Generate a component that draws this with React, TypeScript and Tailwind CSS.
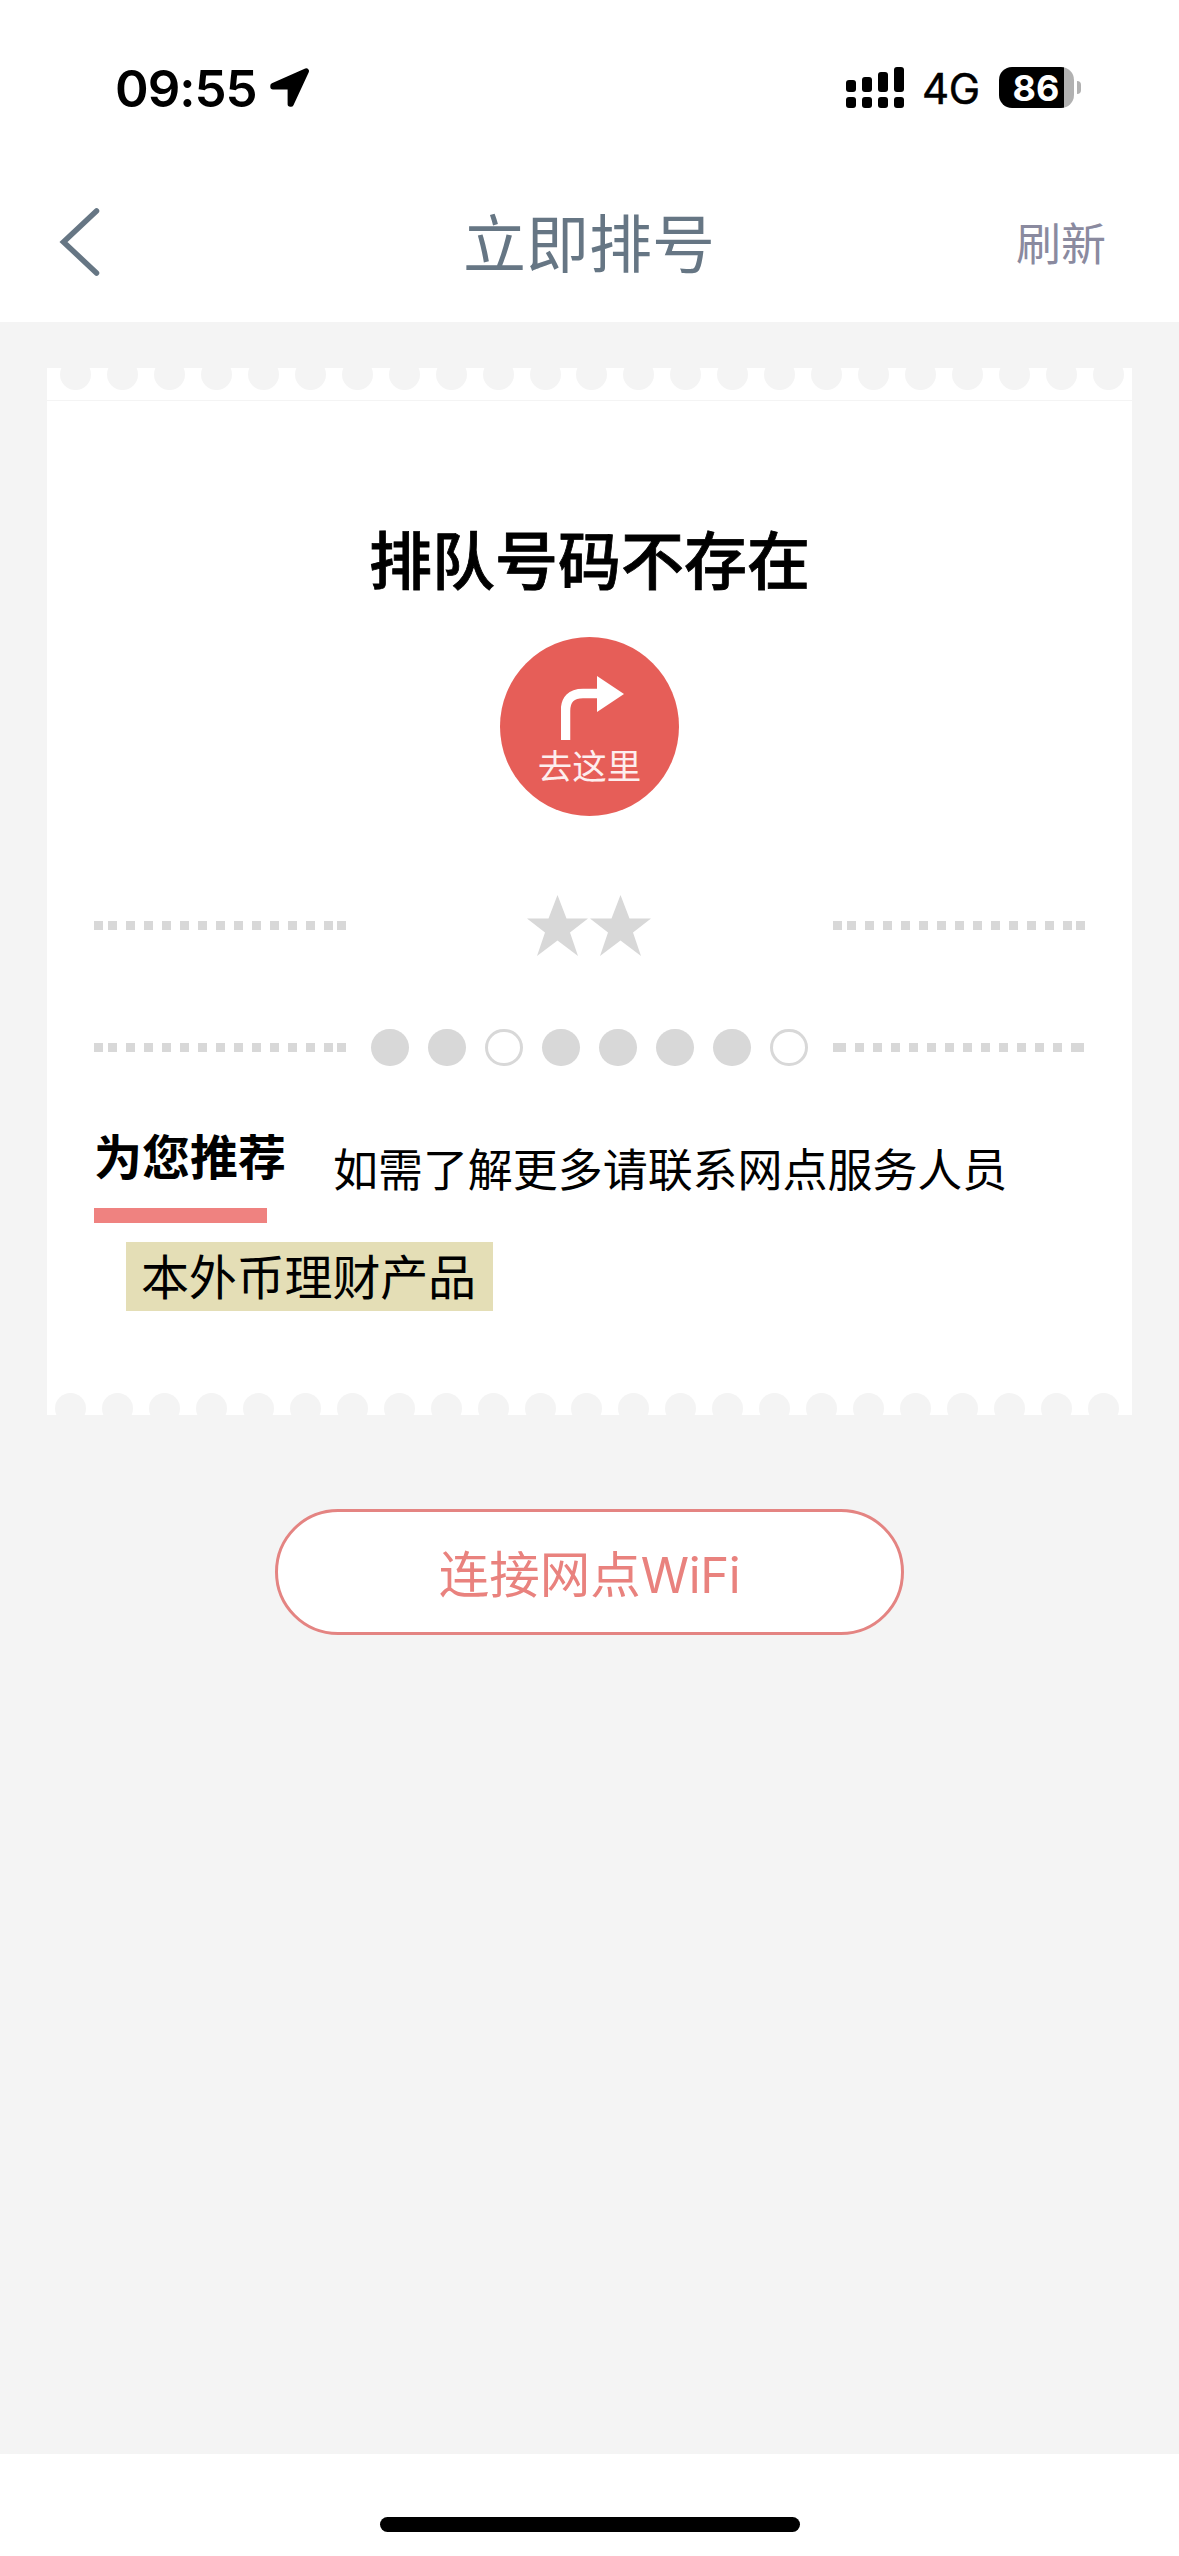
interface NotchRowProps {
  edge: "top" | "bottom";
}

interface DashLineProps {
  joined?: boolean;
}

const NOTCH_COUNT = 23;
const DOTS = [true, true, false, true, true, true, true, false];
const SIGNAL_BARS = ["h-3", "h-[15px]", "h-5", "h-[25px]"];

function StatusBar() {
  return (
    <div className="flex h-[175px] items-start justify-between pl-[115px] pr-[98px] pt-[67px] font-[Inter,sans-serif] text-black">
      <div className="flex h-[42px] items-center">
        <span className="w-[155px] text-[51px] font-semibold leading-none tracking-[-1px]">09:55</span>
        <svg width="40" height="40" viewBox="0 0 40 40">
          <path
            d="M3 17.8 L36.3 3 L21 36 L20.3 36 L20.3 18.8 L3 18.8Z"
            fill="#000"
            stroke="#000"
            strokeWidth="5.4"
            strokeLinejoin="round"
          />
        </svg>
      </div>
      <div className="flex h-[41px] items-center">
        <div className="flex h-[41px] w-[58px] items-end gap-1.5">
          {SIGNAL_BARS.map((height) => (
            <div key={height} className="flex flex-col gap-[5px]">
              <div className={`w-2.5 rounded-[3px] bg-black ${height}`} />
              <div className="h-[11px] w-2.5 rounded-[3px] bg-black" />
            </div>
          ))}
        </div>
        <span className="ml-[18px] w-[60px] pt-[3px] text-[42px] leading-none tracking-[-0.5px] [-webkit-text-stroke:0.5px_black]">
          4G
        </span>
        <div className="ml-[17px] flex h-[41px] w-[75px] items-center justify-center rounded-[13px] bg-[linear-gradient(90deg,#000_65px,#b1b1b1_65px)] text-[36px] font-bold leading-none text-white">
          <span className="-ml-px">86</span>
        </div>
        <div className="ml-[3px] h-[13px] w-[4px] rounded-r-full bg-[#b1b1b1]" />
      </div>
    </div>
  );
}

function NavBar() {
  return (
    <div className="grid h-[147px] grid-cols-3 px-[59px]">
      <div className="pt-[30px]">
        <svg width="46" height="74" viewBox="0 0 46 74" fill="none">
          <path d="M37.5 6 L4.5 37 L37.5 68" stroke="#667684" strokeWidth="5.5" strokeLinecap="round" />
        </svg>
      </div>
      <h1 className="pr-px pt-[32px] text-center text-[63px] leading-[66px] text-[#667684]">立即排号</h1>
      <span className="pr-[14px] pt-[37px] text-right text-[45px] leading-[60px] text-[#8a8a9f]">刷新</span>
    </div>
  );
}

function NotchRow({ edge }: NotchRowProps) {
  return (
    <div
      className={`flex h-[22px] w-[1064px] justify-between overflow-hidden ${
        edge === "top" ? "ml-[13px] items-end" : "ml-2 items-start"
      }`}
    >
      {Array.from({ length: NOTCH_COUNT }, (_, i) => (
        <div key={i} className="size-[31px] shrink-0 rounded-full bg-[#f4f4f4]" />
      ))}
    </div>
  );
}

function DashLine({ joined = false }: DashLineProps) {
  // the dashes sit tighter at both ends
  const cap = joined ? "w-[13px]" : "w-[9px]";
  const count = joined ? 12 : 13;

  return (
    <div className={`flex h-[9px] justify-between ${joined ? "mr-px w-[251px]" : "w-[252px]"}`}>
      <div className={`bg-[#d8d8d8] ${cap}`} />
      <div className="flex gap-[9px]">
        {Array.from({ length: count }, (_, i) => (
          <div key={i} className="w-[9px] bg-[#d8d8d8]" />
        ))}
      </div>
      <div className={`bg-[#d8d8d8] ${cap}`} />
    </div>
  );
}

function Star() {
  return (
    <svg width="63" height="62" viewBox="0 0 63 62">
      <path
        d="M31.5 0 L40.5 23.5 H62 L44 37.5 L52 61 L31.5 45.5 L11 61 L19 37.5 L1 23.5 H22.5Z"
        fill="#d8d8d8"
      />
    </svg>
  );
}

function GoHereButton() {
  return (
    <button className="mt-[44px] flex size-[179px] flex-col items-center rounded-full bg-[#e65e58] pt-[39px] text-white">
      <svg width="64" height="64" viewBox="0 0 64 64" className="ml-[7px]">
        <path d="M4.5 64 V35 Q4.5 17.5 22 17.5 H38" fill="none" stroke="#fff" strokeWidth="9.5" />
        <path d="M36 0 L63 18 L36 36Z" fill="#fff" />
      </svg>
      <span className="mt-[4px] text-[34.5px] leading-[40px] text-[#fdeeee]">去这里</span>
    </button>
  );
}

function TicketCard() {
  return (
    <section className="mx-[47px] mt-[46px] flex h-[1047px] flex-col bg-white">
      <NotchRow edge="top" />
      <div className="mt-[10px] h-px bg-[#f4f4f4]" />

      <div className="mt-[120px] flex flex-col items-center">
        <h2 className="text-[63px] font-medium leading-[72px] text-black [-webkit-text-stroke:0.8px_black]">
          排队号码不存在
        </h2>
        <GoHereButton />
      </div>

      <div className="mt-[78px] flex h-[63px] items-center justify-between px-[47px]">
        <DashLine />
        <div className="mr-[2px] flex">
          <Star />
          <Star />
        </div>
        <DashLine />
      </div>

      <div className="mt-[72px] flex h-[37px] items-center justify-between px-[47px]">
        <DashLine />
        <div className="mr-px flex gap-[19px]">
          {DOTS.map((filled, i) => (
            <div
              key={i}
              className={`h-[37px] w-[38px] rounded-full ${
                filled ? "bg-[#d8d8d8]" : "border-[3px] border-[#d8d8d8]"
              }`}
            />
          ))}
        </div>
        <DashLine joined />
      </div>

      <div className="mt-[57px] flex pl-[47px] text-black">
        <div className="w-[239px]">
          <h3 className="h-[85px] pt-[3px] text-[48px] font-bold leading-[56px]">为您推荐</h3>
          <div className="h-[15px] w-[173px] bg-[#ef8280]" />
        </div>
        <p className="pt-[17px] text-[45px] leading-[56px] tracking-[-0.05px]">如需了解更多请联系网点服务人员</p>
      </div>
      <div className="ml-[79px] mt-[19px] h-[69px] w-[367px] bg-[#e4deb6] pl-[15px] text-[48px] leading-[64px] tracking-[-0.15px] text-black">
        本外币理财产品
      </div>

      <div className="mt-auto">
        <NotchRow edge="bottom" />
      </div>
    </section>
  );
}

export default function App() {
  return (
    <div className="flex h-[2556px] w-[1179px] flex-col bg-[#f4f4f4] font-['Noto_Sans_CJK_SC',sans-serif]">
      <header className="h-[322px] shrink-0 bg-white">
        <StatusBar />
        <NavBar />
      </header>

      <main className="flex flex-1 flex-col">
        <TicketCard />
        <button className="ml-[275px] mt-[94px] flex h-[126px] w-[629px] items-baseline justify-center rounded-full border-[3px] border-[#e48482] bg-white pt-[22px] text-[50.5px] leading-[74px] text-[#e9827e]">
          连接网点<span className="font-[Inter,sans-serif] text-[49px] tracking-[-0.4px]">WiFi</span>
        </button>
      </main>

      <footer className="flex h-[102px] shrink-0 justify-center bg-white pt-[63px]">
        <div className="h-[15px] w-[420px] rounded-full bg-black" />
      </footer>
    </div>
  );
}
